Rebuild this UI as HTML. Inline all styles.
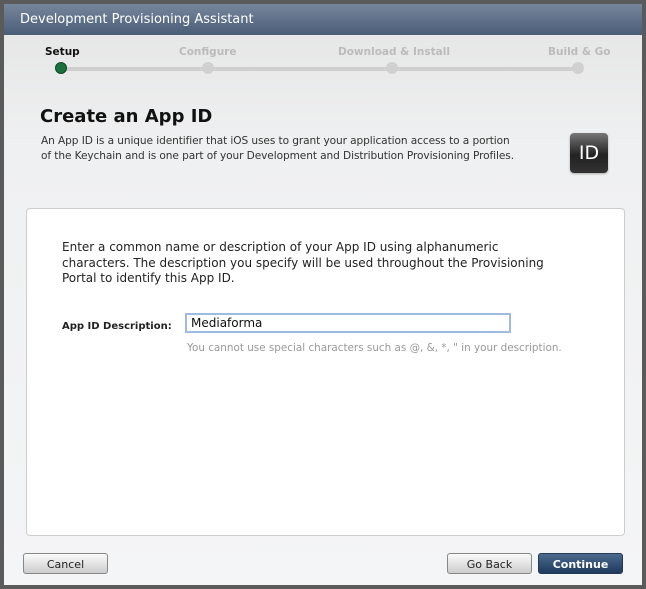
<!DOCTYPE html>
<html><head><style>
body{margin:0;width:646px;height:589px;background:#5a5a5a;position:relative;overflow:hidden;font-family:"DejaVu Sans","Liberation Sans",sans-serif}
.dlg{position:absolute;left:4px;top:4px;width:638px;height:581px;background:linear-gradient(#e4e4e4,#eff0f1 140px,#f4f5f6);}
.tb{position:absolute;left:0;top:0;width:638px;height:31px;background:linear-gradient(#76869c,#4a5d78);color:#fff;font-size:13px;line-height:32px;padding-left:16px;box-sizing:border-box}
.lbl{position:absolute;top:42px;font-size:10.5px;font-weight:bold;color:#bbb}
.line{position:absolute;left:57px;top:63px;width:518px;height:4px;background:#cfcfcf}
.dot{position:absolute;top:58px;width:12px;height:12px;border-radius:50%;background:#d0d0d0}
h1{position:absolute;left:36px;top:102px;margin:0;font-size:18px;font-weight:bold;color:#111;font-family:"DejaVu Sans",sans-serif}
.desc{position:absolute;left:37px;top:130px;font-size:10.6px;line-height:14.5px;color:#333;letter-spacing:-0.1px}
.idi{position:absolute;left:566px;top:129px;width:38px;height:40px;border-radius:4px;background:linear-gradient(#777,#222 55%,#333);color:#fff;font-size:19px;text-align:center;line-height:40px;box-shadow:0 1px 2px #aaa}
.panel{position:absolute;left:22px;top:204px;width:599px;height:328px;background:#fff;border:1px solid #ccc;border-radius:4px;box-sizing:border-box}
.p1{position:absolute;left:58px;top:236px;font-size:12px;line-height:15.5px;color:#222}
.al{position:absolute;left:58px;top:317px;font-size:10px;font-weight:bold;color:#222}
.inp{position:absolute;left:181px;top:309px;width:326px;height:20px;border:2px solid #9fbbe0;box-sizing:border-box;font-size:12px;line-height:16px;padding-left:4px;background:#fff;color:#111}
.hint{position:absolute;left:183px;top:338px;font-size:10.4px;color:#999}
.btn{position:absolute;top:549px;height:21px;border:1px solid #888;border-radius:3px;background:linear-gradient(#fafafa,#ccc);font-size:11px;text-align:center;line-height:21px;color:#222;box-sizing:border-box}
.cont{background:linear-gradient(#4b6a8e,#1e3a5c);color:#fff;font-weight:bold;border-color:#223a55}
</style></head><body>
<div class="dlg">
<div class="tb">Development Provisioning Assistant</div>
<div class="lbl" style="left:41px;color:#111">Setup</div>
<div class="lbl" style="left:175px">Configure</div>
<div class="lbl" style="left:334px">Download &amp; Install</div>
<div class="lbl" style="left:544px">Build &amp; Go</div>
<div class="line"></div>
<div class="dot" style="left:51px;background:#1c7040;border:1px solid #0c4a28;width:10px;height:10px"></div>
<div class="dot" style="left:198px"></div>
<div class="dot" style="left:382px"></div>
<div class="dot" style="left:568px"></div>
<h1>Create an App ID</h1>
<div class="desc">An App ID is a unique identifier that iOS uses to grant your application access to a portion<br>of the Keychain and is one part of your Development and Distribution Provisioning Profiles.</div>
<div class="idi">ID</div>
<div class="panel"></div>
<div class="p1">Enter a common name or description of your App ID using alphanumeric<br>characters. The description you specify will be used throughout the Provisioning<br>Portal to identify this App ID.</div>
<div class="al">App ID Description:</div>
<div class="inp">Mediaforma</div>
<div class="hint">You cannot use special characters such as @, &amp;, *, " in your description.</div>
<div class="btn" style="left:19px;width:85px">Cancel</div>
<div class="btn" style="left:443px;width:85px">Go Back</div>
<div class="btn cont" style="left:534px;width:85px">Continue</div>
</div>
</body></html>
